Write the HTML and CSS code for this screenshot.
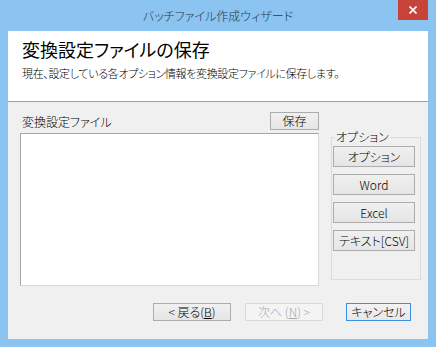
FILE: index.html
```html
<!DOCTYPE html>
<html>
  <head>
    <meta charset="utf-8" />
    <link rel="stylesheet" href="styles.css">
    <title>バッチファイル作成ウィザード</title>
  </head>
  <body>
    <div class="window">
      <!-- title bar -->
      <div class="titlebar">
        <span class="caption">バッチファイル作成ウィザード</span>
        <div class="closeButton">
          <svg width="8" height="8" viewBox="0 0 8 8">
            <path d="M0.5 0.5 L7.5 7.5 M7.5 0.5 L0.5 7.5" stroke="#fff" stroke-width="1.6" fill="none" />
          </svg>
        </div>
      </div>

      <div class="client">
        <div class="header">
          <div class="headTitle">変換設定ファイルの保存</div>
          <div class="headText">現在、設定している各オプション情報を変換設定ファイルに保存します。</div>
        </div>

        <div class="content">
          <div class="fileColumn">
            <div class="fileRow">
              <span class="label">変換設定ファイル</span>
              <button type="button" class="btn saveButton">保存</button>
            </div>
            <div class="listBox"></div>
          </div>

          <fieldset class="optionGroup">
            <legend>オプション</legend>
            <button type="button" class="btn optButton">オプション</button>
            <button type="button" class="btn optButton">Word</button>
            <button type="button" class="btn optButton">Excel</button>
            <button type="button" class="btn optButton">テキスト[CSV]</button>
          </fieldset>
        </div>

        <div class="footer">
          <button type="button" class="btn navButton">&lt; 戻る(<u>B</u>)</button>
          <button type="button" class="btn navButton disabled">次へ (<u>N</u>) &gt;</button>
          <button type="button" class="btn cancelButton">キャンセル</button>
        </div>
      </div>
    </div>
  </body>
</html>
```

FILE: styles.css
```css
body {
  margin: 0;
  font-family: "Noto Sans CJK JP", "Open Sans", sans-serif;
  font-feature-settings: "palt";
  font-weight: 300;
  background: #8bc3f1;
}

.window {
  width: 436px;
  height: 347px;
  box-sizing: border-box;
  padding: 0 8px 8px 8px;
  background-color: #8bc3f1;
}

.titlebar {
  position: relative;
  height: 31px;
  display: flex;
  align-items: center;
  justify-content: center;
}

.caption {
  font-size: 12px;
  color: #2a3a4a;
  margin-top: -1px;
}

.closeButton {
  position: absolute;
  top: 0;
  right: 0;
  width: 30px;
  height: 20px;
  background-color: #c7433a;
  display: flex;
  align-items: center;
  justify-content: center;
}

.client {
  width: 420px;
  height: 308px;
  background-color: #f0f0f0;
  display: flex;
  flex-direction: column;
}

.header {
  height: 63px;
  padding: 7px 0 0 14px;
  background-color: white;
  border-bottom: 1px solid #a0a0a0;
}

.headTitle {
  font-size: 18px;
  font-weight: 400;
  line-height: 22px;
  color: #000;
}

.headText {
  margin-top: 6px;
  font-size: 11px;
  letter-spacing: -0.35px;
  line-height: 14px;
  color: #000;
}

.content {
  display: flex;
  padding: 10px 0 0 12px;
}

.fileColumn {
  width: 299px;
  display: flex;
  flex-direction: column;
}

.fileRow {
  height: 18px;
  display: flex;
  align-items: center;
  justify-content: space-between;
  margin-bottom: 3px;
}

.label {
  font-size: 12px;
  margin-left: 2px;
}

.listBox {
  height: 153px;
  box-sizing: border-box;
  background-color: white;
  border: 1px solid #a5a5a5;
  border-right-color: #d8d8d8;
  border-bottom-color: #d8d8d8;
}

.btn {
  font-family: "Noto Sans CJK JP", "Open Sans", sans-serif;
  font-feature-settings: "palt";
  font-weight: 300;
  font-size: 12px;
  color: #000;
  padding: 0;
  border: 1px solid #acacac;
  background: linear-gradient(#f0f0f0, #e5e5e5);
  box-sizing: border-box;
  line-height: 14px;
}

.btn u {
  text-decoration: underline;
}

.saveButton {
  width: 49px;
  height: 18px;
}

.optionGroup {
  margin: 19px 0 0 12px;
  padding: 3px 5px 0 1px;
  width: 89px;
  height: 149px;
  box-sizing: border-box;
  border: 1px solid #dcdcdc;
  display: flex;
  flex-direction: column;
  gap: 7px;
}

.optionGroup legend {
  font-size: 12px;
  line-height: 12px;
  padding: 0 1px;
  margin-left: 2px;
}

.optButton {
  width: 82px;
  height: 21px;
}

.footer {
  display: flex;
  padding: 17px 0 0 145px;
}

.navButton {
  width: 78px;
  height: 18px;
  margin-right: 14px;
}

.navButton.disabled {
  color: #a6a6a6;
  background: #f4f4f4;
  border-color: #d9d9d9;
  margin-right: 23px;
}

.cancelButton {
  width: 65px;
  height: 18px;
  border-color: #3c8fe6;
  background: linear-gradient(#f2f2f2, #e8e8e8);
}
```
